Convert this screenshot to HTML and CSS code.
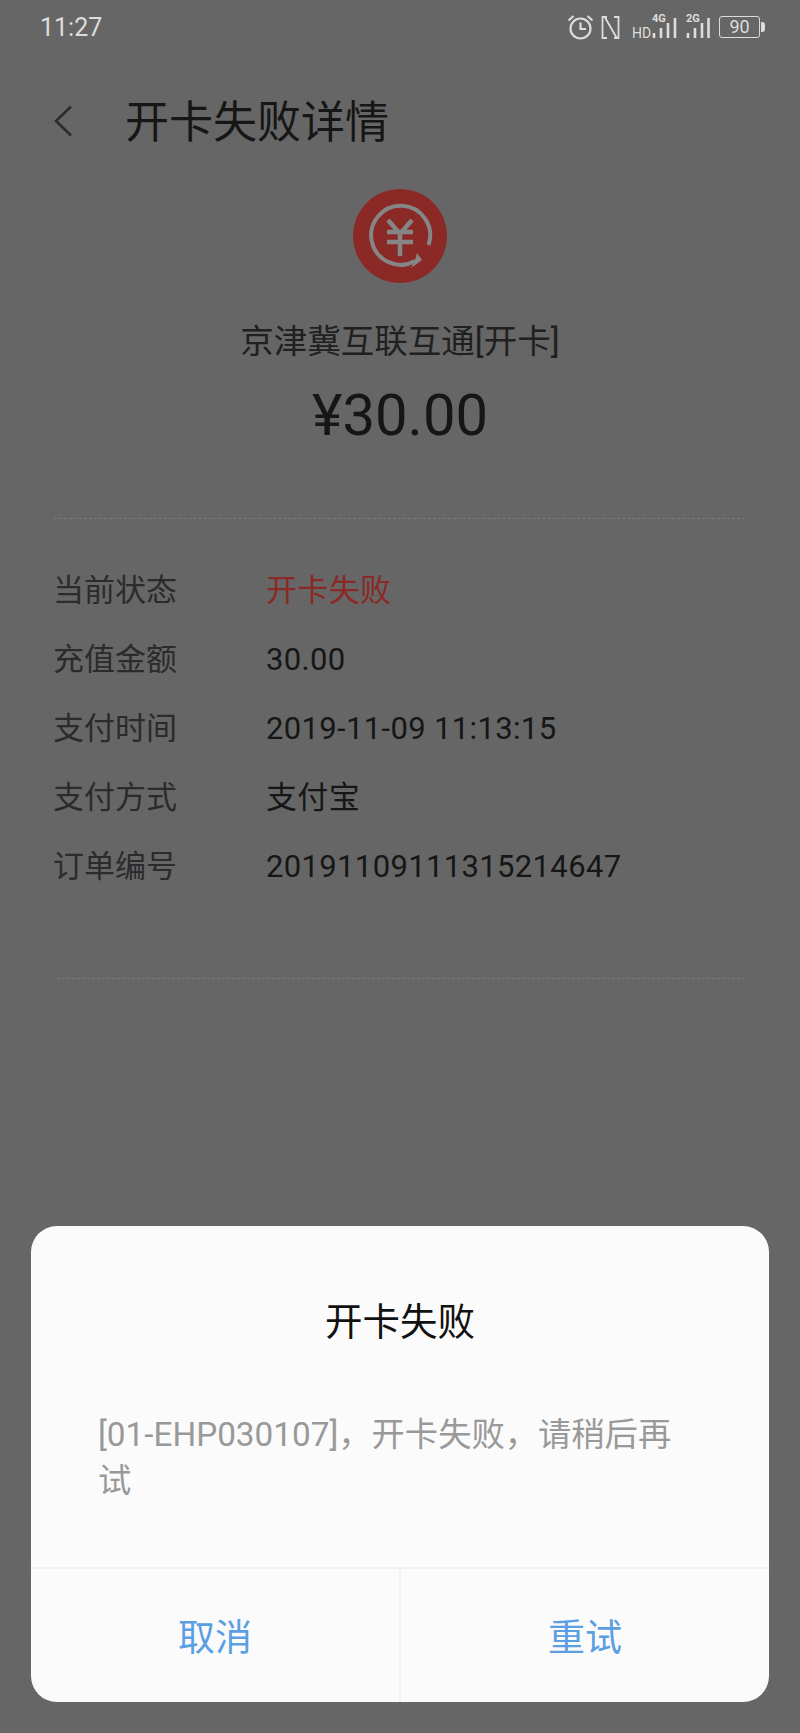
FILE: index.html
```html
<!DOCTYPE html>
<html lang="zh-CN">
  <head>
    <meta charset="UTF-8" />
    <meta name="viewport" content="width=device-width, initial-scale=1.0" />
    <title>开卡失败详情</title>
    <link rel="stylesheet" href="styles.css">
  </head>
  <body>
    <div class="status-bar">
      <span class="clock">11:27</span>
      <div class="status-icons">
        <svg class="icon-alarm" width="27" height="26" viewBox="0 0 27 26">
          <circle cx="13.5" cy="14.5" r="10" />
          <path d="M13.5 8.5v6.5h5.5M1.5 6.5l5-4.5M25.5 6.5l-5-4.5" />
        </svg>
        <svg class="icon-nfc" width="19" height="25" viewBox="0 0 19 25">
          <path d="M6 2H1.5v21H6M13 2h4.5v21H13M4 2.5l11.5 20" />
        </svg>
        <svg class="icon-signal" width="46" height="28" viewBox="0 0 46 28">
          <text x="0" y="25" class="tag-hd">HD</text>
          <text x="20" y="9" class="tag-net">4G</text>
          <path d="M22 25v-5M29 25v-10M36 25v-15M43 25v-20" />
        </svg>
        <svg class="icon-signal icon-signal-2g" width="25" height="28" viewBox="0 0 25 28">
          <text x="0" y="9" class="tag-net">2G</text>
          <path d="M2 25v-5M9 25v-10M16 25v-15M22.5 25v-20" />
        </svg>
        <div class="battery">
          <span class="battery-body">90</span>
          <span class="battery-nub"></span>
        </div>
      </div>
    </div>

    <header class="top-bar">
      <svg class="back" width="20" height="32" viewBox="0 0 20 32">
        <path d="M18 1.5 3 16l15 14.5" />
      </svg>
      <h1>开卡失败详情</h1>
    </header>

    <section class="summary">
      <svg class="order-icon" width="94" height="94" viewBox="-47 -47 94 94">
        <circle class="order-icon-bg" r="47" />
        <path class="order-icon-ring" d="M28.5 9A29.5 29.5 0 1 0 15 25" />
        <path class="order-icon-arrow" d="M11 32 22 24 17 17 15 24Z" />
        <path class="order-icon-yen" d="M-12-16 0-2 12-16M-13-4H13M-13 6H13M0-2V20" />
      </svg>
      <p class="merchant">京津冀互联互通[开卡]</p>
      <p class="amount">¥30.00</p>
    </section>

    <div class="dash-line"></div>

    <dl class="details">
      <div class="row"><dt>当前状态</dt><dd class="failed">开卡失败</dd></div>
      <div class="row"><dt>充值金额</dt><dd>30.00</dd></div>
      <div class="row"><dt>支付时间</dt><dd>2019-11-09 11:13:15</dd></div>
      <div class="row"><dt>支付方式</dt><dd>支付宝</dd></div>
      <div class="row"><dt>订单编号</dt><dd>20191109111315214647</dd></div>
    </dl>

    <div class="dash-line dash-line-bottom"></div>

    <div class="dialog">
      <h2>开卡失败</h2>
      <p class="dialog-message">[01-EHP030107]，开卡失败，请稍后再试</p>
      <div class="dialog-actions">
        <button>取消</button>
        <button>重试</button>
      </div>
    </div>
  </body>
</html>
```

FILE: styles.css
```css
:root {
  --bg-color: #666666;
  --text-dark: #161616;
  --text-label: #2b2b2b;
  --status-color: #dcdcdc;
  --red: #8a2926;
  --blue: #5b9fe3;
}

* {
  margin: 0;
  padding: 0;
  box-sizing: border-box;
}

body {
  position: relative;
  height: 1733px;
  overflow: hidden;
  background-color: var(--bg-color);
  font-family: Roboto, 'Noto Sans CJK SC', sans-serif;
  color: var(--text-dark);
}

.status-bar {
  height: 54px;
  padding: 0 35px 0 40px;
  display: flex;
  justify-content: space-between;
  align-items: center;
  color: var(--status-color);
}

.clock {
  font-size: 25px;
}

.status-icons {
  display: flex;
  align-items: center;
}

.status-icons svg {
  fill: none;
  stroke: var(--status-color);
}

.icon-alarm {
  stroke-width: 2.2;
}

.icon-nfc {
  margin-left: 7px;
  stroke-width: 1.8;
}

.icon-signal {
  margin-left: 12px;
  stroke-width: 2.6;
}

.icon-signal-2g {
  margin-left: 8px;
}

.icon-signal text {
  fill: var(--status-color);
  stroke: none;
}

.tag-hd {
  font-size: 14px;
}

.tag-net {
  font-size: 11px;
  font-weight: 700;
}

.battery {
  margin-left: 8px;
  display: flex;
  align-items: center;
}

.battery-body {
  width: 41px;
  height: 22px;
  border: 1.5px solid var(--status-color);
  border-radius: 3px;
  font-size: 18px;
  line-height: 19px;
  text-align: center;
}

.battery-nub {
  margin-left: 1px;
  width: 4px;
  height: 10px;
  background-color: var(--status-color);
  border-radius: 0 3px 3px 0;
}

.top-bar {
  height: 134px;
  padding-left: 53px;
  display: flex;
  align-items: center;
  gap: 52px;
}

.back {
  fill: none;
  stroke: #2b2b2b;
  stroke-width: 2.6;
}

.top-bar h1 {
  margin-top: 3px;
  font-size: 44px;
  font-weight: 400;
  line-height: 60px;
}

.summary {
  display: flex;
  flex-direction: column;
  align-items: center;
}

.order-icon {
  margin-top: 1px;
}

.order-icon-bg {
  fill: var(--red);
}

.order-icon-ring,
.order-icon-yen {
  fill: none;
  stroke: #868686;
  stroke-width: 4;
}

.order-icon-yen {
  stroke-width: 4.5;
}

.order-icon-arrow {
  fill: #868686;
}

.merchant {
  margin-top: 37px;
  font-size: 33.5px;
  line-height: 44px;
  color: #202020;
}

.amount {
  margin-top: 16px;
  font-size: 58px;
  line-height: 70px;
}

.dash-line {
  margin: 68px 55px 0 54px;
  border-top: 1px dashed #7a7a7a;
}

.dash-line-bottom {
  margin: 77px 55px 0 57px;
}

.details {
  margin-top: 37px;
  padding-left: 53px;
  font-size: 31px;
  line-height: 69px;
}

.row {
  display: flex;
}

.row dt {
  width: 213px;
  color: var(--text-label);
}

.row dd {
  letter-spacing: 0.35px;
}

.failed {
  color: var(--red);
}

.dialog {
  position: absolute;
  left: 31px;
  right: 31px;
  bottom: 31px;
  height: 476px;
  display: flex;
  flex-direction: column;
  background-color: #fbfbfb;
  border-radius: 26px;
  overflow: hidden;
}

.dialog h2 {
  margin-top: 68px;
  font-size: 37.5px;
  font-weight: 400;
  line-height: 56px;
  text-align: center;
  color: #111111;
}

.dialog-message {
  margin-top: 62px;
  padding: 0 70px 0 67px;
  flex: 1;
  font-size: 33.3px;
  line-height: 46px;
  color: #999999;
}

.dialog-actions {
  height: 135px;
  display: flex;
  border-top: 2px solid #f1f1f1;
}

.dialog-actions button {
  flex: 1;
  padding-bottom: 2px;
  background: none;
  border: none;
  font-family: inherit;
  font-size: 37px;
  color: var(--blue);
}

.dialog-actions button + button {
  border-left: 2px solid #f1f1f1;
}
```
